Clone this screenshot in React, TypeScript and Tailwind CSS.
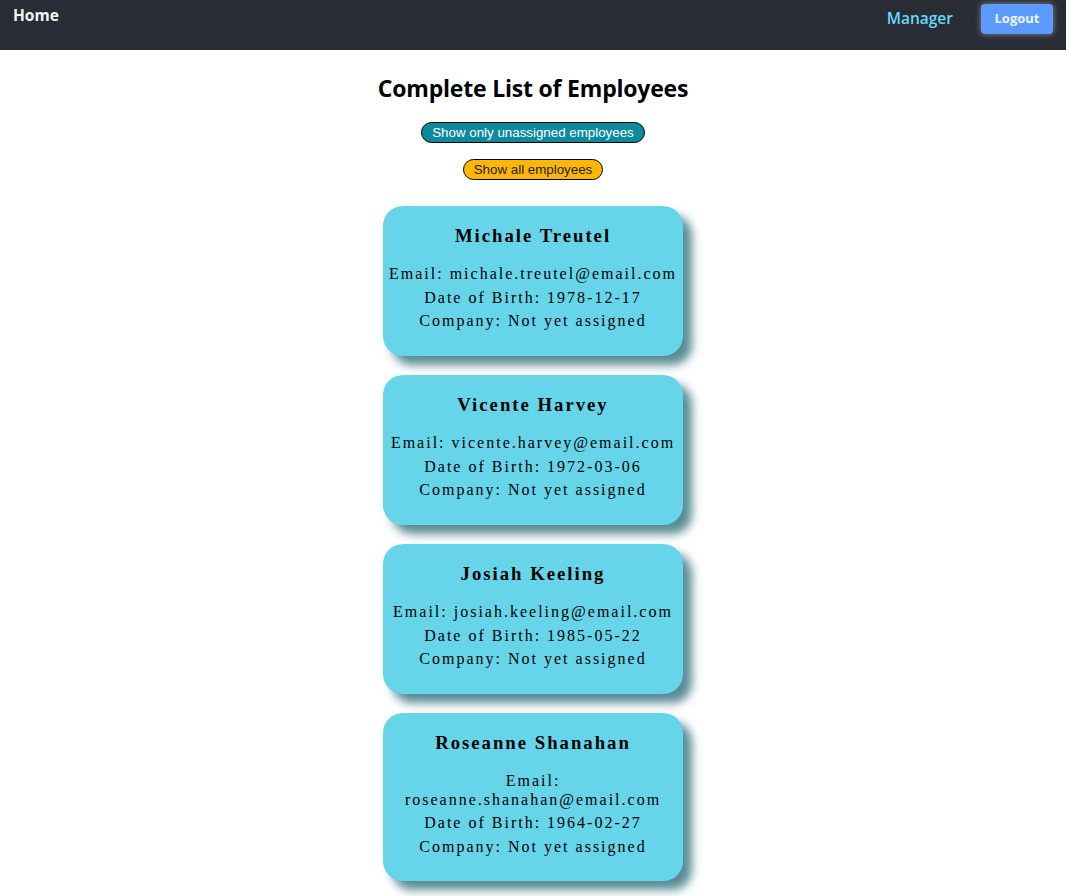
import React from "react";

const employees = [
  { name: "Michale Treutel", email: "michale.treutel@email.com", dob: "1978-12-17" },
  { name: "Vicente Harvey", email: "vicente.harvey@email.com", dob: "1972-03-06" },
  { name: "Josiah Keeling", email: "josiah.keeling@email.com", dob: "1985-05-22" },
  { name: "Roseanne Shanahan", email: "roseanne.shanahan@email.com", dob: "1964-02-27" },
];

export default function App() {
  return (
    <div className="min-h-screen bg-white">
      <nav className="flex h-[50px] items-start justify-between bg-[#282c34] px-[13px] font-['Open_Sans',sans-serif]">
        <a className="mt-[4px] text-[15.5px] font-bold text-[#f4f4f4]">Home</a>
        <div className="flex items-start">
          <a className="mt-[7px] text-[15.5px] font-semibold text-[#61dafb]">Manager</a>
          <button className="ml-[28px] mt-[4px] h-[30px] w-[72px] rounded-[4px] bg-[#5b9bff] text-[13px] font-bold text-[#eef3ff] shadow-[0_0_6px_rgba(255,255,255,0.45)]">
            Logout
          </button>
        </div>
      </nav>
      <main className="flex flex-col items-center">
        <h1 className="mt-[22px] text-[23px] font-bold leading-[32px] text-black font-['Open_Sans',sans-serif] tracking-[-0.2px]">
          Complete List of Employees
        </h1>
        <button className="mt-[18px] h-[21px] rounded-full border border-black bg-[#0e8a9e] px-[10px] text-[13.33px] leading-[19px] text-white font-['Liberation_Sans',Arial,sans-serif]">
          Show only unassigned employees
        </button>
        <button className="mt-[16px] h-[21px] rounded-full border border-black bg-[#ffb703] px-[10px] text-[13.33px] leading-[19px] text-[#222] font-['Liberation_Sans',Arial,sans-serif]">
          Show all employees
        </button>
        <div className="mt-[26px] flex flex-col gap-[19.5px] pb-[20px]">
          {employees.map((e) => (
            <div
              key={e.email}
              className="w-[300px] rounded-[20px] bg-[#66d5ea] px-[4px] pb-[20px] pt-[19px] text-center text-black shadow-[9px_9px_10px_rgba(60,120,130,0.85)] font-['Liberation_Serif','Times_New_Roman',serif]"
            >
              <h3 className="text-[18.72px] font-bold leading-[22px] tracking-[2px]">{e.name}</h3>
              <div className="mt-[18px] text-[16px] leading-[18.5px] tracking-[2px]">
                <p className="mb-[5px]">Email: {e.email}</p>
                <p className="mb-[5px]">Date of Birth: {e.dob}</p>
                <p className="mb-[5px]">Company: Not yet assigned</p>
              </div>
            </div>
          ))}
        </div>
      </main>
    </div>
  );
}
